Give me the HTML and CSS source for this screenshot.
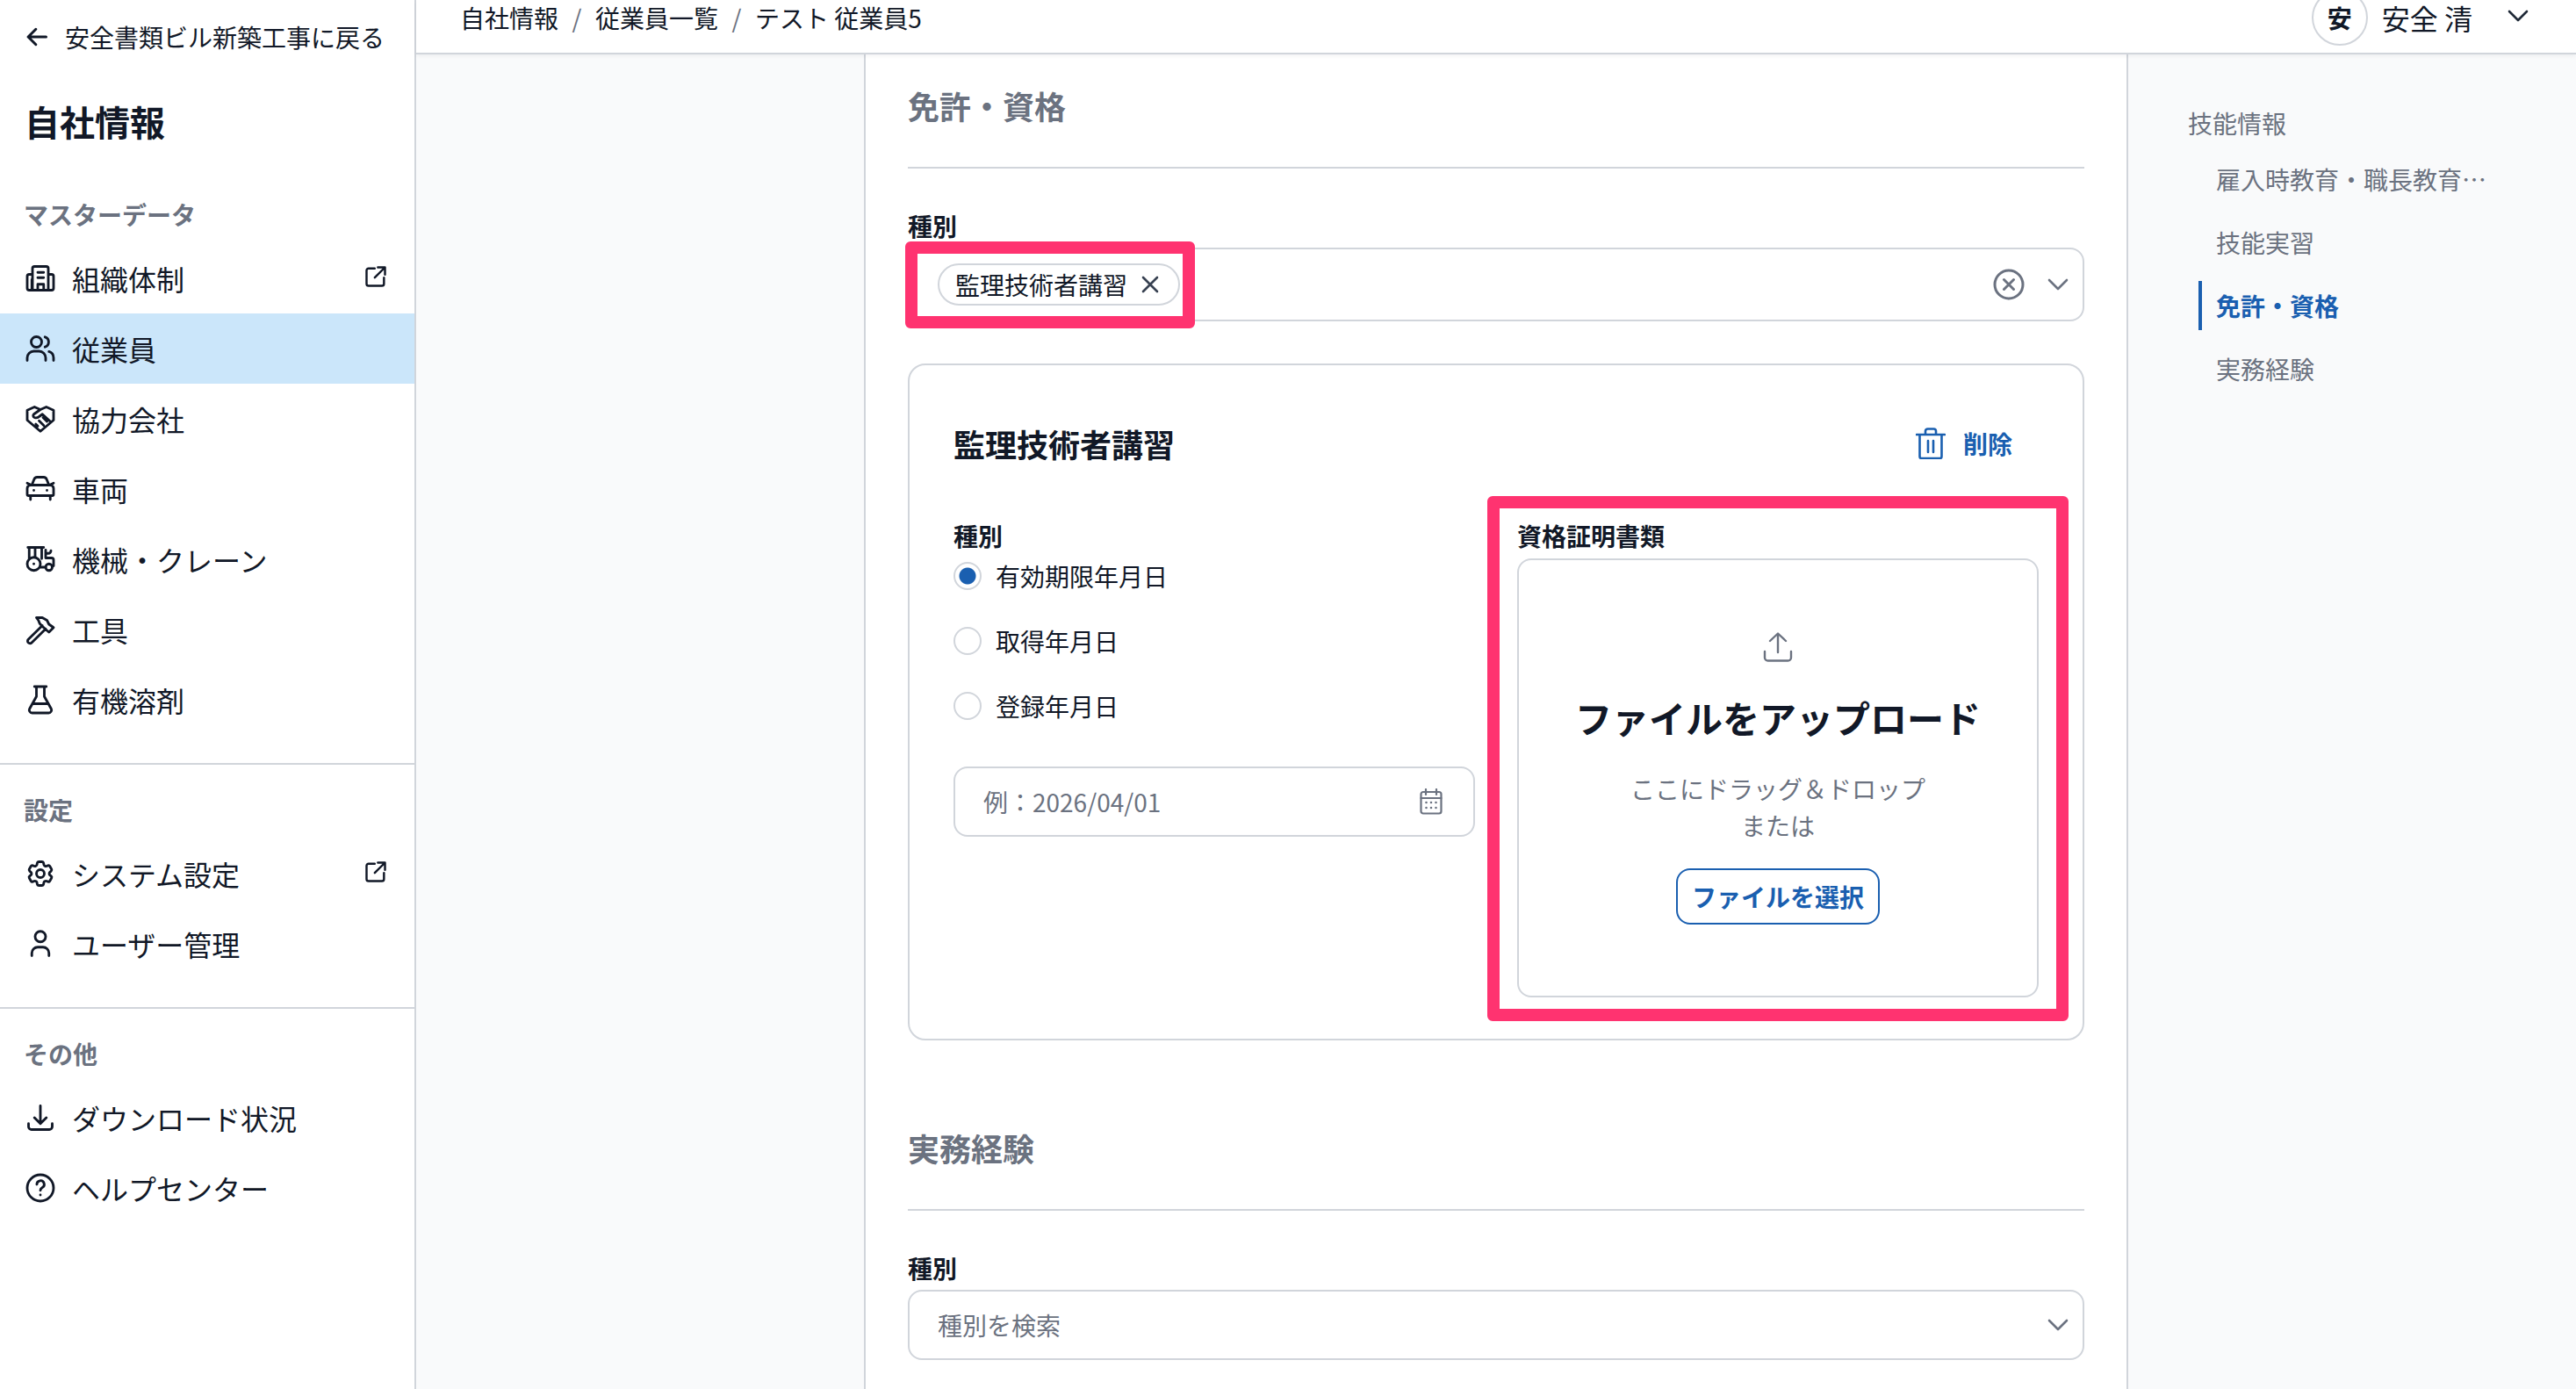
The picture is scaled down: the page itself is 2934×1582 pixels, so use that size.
FILE: index.html
```html
<!DOCTYPE html>
<html lang="ja">
<head>
<meta charset="utf-8">
<title>自社情報</title>
<link rel="stylesheet" href="styles.css">
</head>
<body>
<div class="app">
  <aside class="sidebar">
    <a class="back"><svg class="ico-back" viewBox="0 0 24 24"><path d="M21 12H3.5M11 4.5 3.5 12l7.5 7.5"/></svg><span>安全書類ビル新築工事に戻る</span></a>
    <h1 class="side-title">自社情報</h1>
    <section class="side-group first">
      <h2 class="side-label">マスターデータ</h2>
      <a class="nav"><svg class="ico" viewBox="0 0 24 24"><path d="M6 9H3.5A1.5 1.5 0 0 0 2 10.5v9A1.5 1.5 0 0 0 3.500 21h17a1.500 1.500 0 0 0 1.500-1.500v-9A1.500 1.500 0 0 0 20.500 9H18M6 21V4.500A1.500 1.500 0 0 1 7.500 3h9A1.500 1.500 0 0 1 18 4.500V21M5.500 13v8M10 7.500h4.500M10 11.500h4.500M10 21v-4.500h4.500V21"/></svg><span class="nav-text">組織体制</span><svg class="ico-ext" viewBox="0 0 24 24"><path d="M11 4H5a2 2 0 0 0-2 2v13a2 2 0 0 0 2 2h13a2 2 0 0 0 2-2v-6M11 13 21 3M14 3h7v7"/></svg></a>
      <a class="nav active"><svg class="ico" viewBox="0 0 24 24"><circle cx="9" cy="7" r="4"/><path d="M2 21v-2a5 5 0 0 1 5-5h4a5 5 0 0 1 5 5v2M15.500 3.200a4 4 0 0 1 0 7.600M22 21v-2a5 5 0 0 0-3.500-4.700"/></svg><span class="nav-text">従業員</span></a>
      <a class="nav"><svg class="ico" viewBox="0 0 24 24"><path d="M2 5.500 7.500 3l4.500 2 4.500-2L22 5.500V13l-10 8.500L2 13zM12 5 7 8.500c-.8.700-.6 2 .500 2.500 1.500.6 2.800.2 4-1l2-1.500 6 5.500M8.500 16l1.500 1.500M11 13.500l3.500 3.500M14 11l3 3"/></svg><span class="nav-text">協力会社</span></a>
      <a class="nav"><svg class="ico" viewBox="0 0 24 24"><path d="m5.500 9 1.700-4.300A2.500 2.500 0 0 1 9.500 3h5a2.500 2.500 0 0 1 2.300 1.700L18.500 9M2 7.500 5 9M22 7.500 19 9M4.500 9h15A2.500 2.500 0 0 1 22 11.500V16a1 1 0 0 1-1 1H3a1 1 0 0 1-1-1v-4.500A2.500 2.500 0 0 1 4.500 9zM4.500 17v3M19.500 17v3M7 13h.01M17 13h.01"/></svg><span class="nav-text">車両</span></a>
      <a class="nav"><svg class="ico" viewBox="0 0 24 24"><circle cx="7" cy="15.500" r="5"/><path d="M7 15.500h.01"/><circle cx="18.500" cy="18" r="2.500"/><path d="M12 18h4M22 17v-4.500a1.500 1.500 0 0 0-1.500-1.500H16M3.500 11.500V3h9.500v8.500M2.500 3h12M8 3v7M16 11V5M16 7.500h2a2 2 0 0 0 2-2"/></svg><span class="nav-text">機械・クレーン</span></a>
      <a class="nav"><svg class="ico" viewBox="0 0 24 24"><path d="M13.500 9 2.800 19.500a1.800 1.800 0 0 0 2.600 2.500L16 11.500M9 3h4.500L17 5l1.500 3 3.500 2.500-3.500 3.500-3-2.500-4-4-1-2.500z"/></svg><span class="nav-text">工具</span></a>
      <a class="nav"><svg class="ico" viewBox="0 0 24 24"><path d="M7.500 2h9M9 2v7.500L3.800 18.800A2.200 2.200 0 0 0 5.700 22h12.600a2.200 2.200 0 0 0 1.900-3.200L15 9.500V2M6.500 15h11"/></svg><span class="nav-text">有機溶剤</span></a>
    </section>
    <section class="side-group">
      <h2 class="side-label">設定</h2>
      <a class="nav"><svg class="ico" viewBox="0 0 24 24"><path d="M9.594 3.940c.09-.542.56-.94 1.110-.94h2.593c.55 0 1.020.398 1.110.94l.213 1.281c.063.374.313.686.645.870.074.04.147.083.22.127.325.196.72.257 1.075.124l1.217-.456a1.125 1.125 0 0 1 1.370.49l1.296 2.247a1.125 1.125 0 0 1-.26 1.431l-1.003.827c-.293.241-.438.613-.43.992a7.723 7.723 0 0 1 0 .255c-.008.378.137.75.43.991l1.004.827c.424.35.534.955.26 1.430l-1.298 2.247a1.125 1.125 0 0 1-1.369.491l-1.217-.456c-.355-.133-.75-.072-1.076.124a6.470 6.470 0 0 1-.22.128c-.331.183-.581.495-.644.869l-.213 1.281c-.09.543-.56.94-1.110.94h-2.594c-.55 0-1.019-.398-1.110-.94l-.213-1.281c-.062-.374-.312-.686-.644-.870a6.520 6.520 0 0 1-.22-.127c-.325-.196-.72-.257-1.076-.124l-1.217.456a1.125 1.125 0 0 1-1.369-.49l-1.297-2.247a1.125 1.125 0 0 1 .26-1.431l1.004-.827c.292-.24.437-.613.43-.991a6.932 6.932 0 0 1 0-.255c.007-.38-.138-.751-.43-.992l-1.004-.827a1.125 1.125 0 0 1-.26-1.430l1.297-2.247a1.125 1.125 0 0 1 1.370-.491l1.216.456c.356.133.751.072 1.076-.124.072-.044.146-.086.22-.128.332-.183.582-.495.644-.869l.214-1.280Z"/><circle cx="12" cy="12" r="3"/></svg><span class="nav-text">システム設定</span><svg class="ico-ext" viewBox="0 0 24 24"><path d="M11 4H5a2 2 0 0 0-2 2v13a2 2 0 0 0 2 2h13a2 2 0 0 0 2-2v-6M11 13 21 3M14 3h7v7"/></svg></a>
      <a class="nav"><svg class="ico" viewBox="0 0 24 24"><circle cx="12" cy="6.500" r="4"/><path d="M5.500 21v-2a4.500 4.500 0 0 1 4.500-4.500h4a4.500 4.500 0 0 1 4.500 4.500v2"/></svg><span class="nav-text">ユーザー管理</span></a>
    </section>
    <section class="side-group">
      <h2 class="side-label">その他</h2>
      <a class="nav"><svg class="ico" viewBox="0 0 24 24"><path d="M3 16.500v2.250A2.250 2.250 0 0 0 5.250 21h13.500A2.250 2.250 0 0 0 21 18.750V16.500M16.500 12 12 16.500m0 0L7.500 12m4.500 4.500V3"/></svg><span class="nav-text">ダウンロード状況</span></a>
      <a class="nav"><svg class="ico" viewBox="0 0 24 24"><circle cx="12" cy="12" r="10"/><path d="M9.300 9.300a2.800 2.800 0 1 1 4.200 2.400c-.9.5-1.500 1.100-1.500 2.100M12 17.300h.01"/></svg><span class="nav-text">ヘルプセンター</span></a>
    </section>
  </aside>

  <div class="main">
    <header class="topbar">
      <nav class="crumbs">
        <span>自社情報</span><span class="sep">/</span><span>従業員一覧</span><span class="sep">/</span><span>テスト 従業員5</span>
      </nav>
      <div class="user">
        <span class="avatar">安</span>
        <span class="user-name">安全 清</span>
        <svg class="user-chev" viewBox="0 0 24 24"><path d="m2 6 10 10L22 6"/></svg>
      </div>
    </header>

    <div class="body">
      <div class="gutter"></div>
      <main class="sheet">
        <h2 class="section-title">免許・資格</h2>
        <div class="field-label first-label">種別</div>
        <div class="select tall">
          <span class="chip">監理技術者講習<svg class="chip-x" viewBox="0 0 20 20"><path d="m2 2 16 16M18 2 2 18"/></svg></span>
          <span class="select-tools">
            <svg class="clear" viewBox="0 0 36 36"><circle cx="18" cy="18" r="16"/><path d="m12.500 12.500 11 11M23.500 12.500l-11 11"/></svg>
            <svg class="chev" viewBox="0 0 24 14"><path d="m2 2 10 10L22 2"/></svg>
          </span>
          <div class="mark mark-chip"></div>
        </div>

        <div class="card">
          <div class="card-head">
            <h3 class="card-title">監理技術者講習</h3>
            <a class="delete"><svg class="trash" viewBox="0 0 34 36"><path d="M1 8h32M4.500 8v25a2 2 0 0 0 2 2h21a2 2 0 0 0 2-2V8M11 8V4a2.500 2.500 0 0 1 2.500-2.500h7A2.500 2.500 0 0 1 23 4v4M14 15v13M20 15v13"/></svg><span>削除</span></a>
          </div>
          <div class="card-cols">
            <div class="col">
              <div class="field-label">種別</div>
              <div class="radios">
                <label class="radio"><span class="dot on"></span>有効期限年月日</label>
                <label class="radio"><span class="dot"></span>取得年月日</label>
                <label class="radio"><span class="dot"></span>登録年月日</label>
              </div>
              <div class="date-input">
                <span>例：2026/04/01</span>
                <svg class="cal" viewBox="0 0 26 30"><path d="M7 1v6M19 1v6"/><rect x="1.500" y="4" width="23" height="24.500" rx="2.500"/><path d="M1.500 11h23"/><path class="cal-dots" d="M7.500 16h.01M13 16h.01M18.500 16h.01M7.500 22h.01M13 22h.01M18.500 22h.01"/></svg>
              </div>
            </div>
            <div class="col col-file">
              <div class="field-label">資格証明書類</div>
              <div class="drop">
                <svg class="upload" viewBox="0 0 34 34"><path d="M17 23V2M8 10l9-8.500 9 8.500M2 22v7a3.500 3.500 0 0 0 3.500 3.500h23A3.500 3.500 0 0 0 32 29v-7"/></svg>
                <div class="drop-title">ファイルをアップロード</div>
                <div class="drop-text">ここにドラッグ＆ドロップ<br>または</div>
                <button class="pick">ファイルを選択</button>
              </div>
              <div class="mark mark-file"></div>
            </div>
          </div>
        </div>

        <h2 class="section-title second">実務経験</h2>
        <div class="field-label first-label">種別</div>
        <div class="select">
          <span class="placeholder">種別を検索</span>
          <span class="select-tools"><svg class="chev" viewBox="0 0 24 14"><path d="m2 2 10 10L22 2"/></svg></span>
        </div>
      </main>
      <aside class="toc">
        <a class="toc-head">技能情報</a>
        <a class="toc-item">雇入時教育・職長教育…</a>
        <a class="toc-item">技能実習</a>
        <a class="toc-item current">免許・資格</a>
        <a class="toc-item">実務経験</a>
      </aside>
    </div>
  </div>
</div>
</body>
</html>
```

FILE: styles.css
```css
* { box-sizing: border-box; }
html, body { margin: 0; height: 100%; overflow: hidden; }
body {
  font-family: "Noto Sans CJK JP", "Noto Sans", sans-serif;
  font-size: 28px;
  color: #111827;
  background: #fff;
}
h1, h2, h3 { margin: 0; }
svg { display: block; flex: none; fill: none; stroke: currentColor; stroke-linecap: round; stroke-linejoin: round; }

.app { display: flex; height: 1582px; }

/* sidebar */
.sidebar { width: 474px; flex: none; border-right: 2px solid #d1d5db; background: #fff; }
.back { display: flex; align-items: center; height: 40px; margin: 22px 0 0 28px; gap: 18px; line-height: 40px; }
.ico-back { width: 28px; height: 28px; stroke-width: 2.600; }
.side-title { font-size: 40px; line-height: 60px; font-weight: 700; margin: 46px 0 0 28px; }
.side-group { padding: 31px 0 32px; border-top: 2px solid #d1d5db; }
.side-group.first { padding-top: 0; border-top: 0; margin-top: 56px; }
.side-label { font-size: 28px; line-height: 40px; font-weight: 700; color: #6b7280; padding-left: 27px; margin-bottom: 13px; }
.nav { display: flex; align-items: center; height: 80px; padding: 0 28px; gap: 18px; }
.nav.active { background: #cbe6fa; }
.nav-text { flex: 1; font-size: 32px; line-height: 48px; }
.ico { width: 36px; height: 36px; stroke-width: 1.900; }
.ico-ext { width: 28px; height: 28px; stroke-width: 2.100; margin-right: 2px; margin-top: -4px; }

/* main column */
.main { flex: 1; min-width: 0; display: flex; flex-direction: column; }
.topbar {
  flex: none; height: 62px; display: flex; justify-content: space-between; align-items: center;
  padding: 0 54px 20px 50px; border-bottom: 2px solid #d1d5db;
  box-shadow: 0 2px 4px rgba(17, 24, 39, .05); position: relative; z-index: 1; background: #fff;
}
.crumbs { display: flex; line-height: 40px; white-space: nowrap; }
.sep { width: 42px; text-align: center; color: #6b7280; }
.user { display: flex; align-items: center; }
.avatar {
  width: 64px; height: 64px; flex: none; border: 2px solid #d1d5db; border-radius: 50%;
  display: flex; align-items: center; justify-content: center; font-weight: 700; margin-right: 16px;
}
.user-name { font-size: 32px; line-height: 48px; }
.user-chev { width: 24px; height: 24px; stroke-width: 2.600; margin-left: 40px; color: #1f2937; margin-top: -2px; }

.body { flex: 1; min-height: 0; display: flex; }
.gutter { width: 510px; flex: none; background: #f9fafb; }
.sheet { width: 1440px; flex: none; padding: 0 48px; background: #fff; border-left: 2px solid #d1d5db; border-right: 2px solid #d1d5db; }
.toc { flex: 1; background: #f9fafb; padding: 42px 0 0 68px; color: #6b7280; }

.section-title {
  font-size: 36px; line-height: 54px; font-weight: 700; color: #6b7280;
  margin-top: 31px; padding-bottom: 43px; border-bottom: 2px solid #d1d5db;
}
.section-title.second { margin-top: 95px; }
.field-label { font-size: 28px; line-height: 40px; font-weight: 700; }
.first-label { margin-top: 45px; margin-bottom: 5px; }

.select {
  position: relative; display: flex; align-items: center; height: 80px;
  border: 2px solid #d1d5db; border-radius: 16px; padding: 0 16px 0 32px;
}
.select.tall { height: 84px; }
.placeholder { flex: 1; color: #6b7280; }
.chip {
  display: flex; align-items: center; height: 48px; padding: 0 22px 0 18px;
  border: 2px solid #d1d5db; border-radius: 24px; line-height: 40px;
}
.chip-x { width: 20px; height: 20px; margin-left: 16px; stroke-width: 2.600; color: #374151; }
.select-tools { margin-left: auto; display: flex; align-items: center; gap: 26px; color: #6b7280; }
.clear { width: 36px; height: 36px; stroke-width: 3; }
.chev { width: 24px; height: 14px; stroke-width: 2.600; }

.mark { position: absolute; border: 14px solid #ff3370; border-radius: 6px; pointer-events: none; }
.mark-chip { left: -5px; top: -9px; width: 330px; height: 99px; }

/* card */
.card { margin-top: 48px; height: 771px; border: 2px solid #d1d5db; border-radius: 20px; padding: 0 50px; }
.card-head { display: flex; align-items: center; justify-content: space-between; height: 78px; margin-top: 50px; padding-right: 30px; }
.card-title { font-size: 36px; line-height: 54px; font-weight: 700; }
.delete { display: flex; align-items: center; gap: 20px; color: #1a5fb0; font-weight: 700; }
.trash { width: 34px; height: 36px; stroke-width: 2.600; }
.card-cols { display: grid; grid-template-columns: 594px 594px; column-gap: 48px; margin-top: 46px; }
.col { min-width: 0; }
.col-file { position: relative; }
.mark-file { left: -34px; right: -34px; top: -25px; height: 598px; }
.radios { display: flex; flex-direction: column; gap: 42px; margin-top: 10px; }
.radio { display: flex; align-items: center; gap: 16px; height: 32px; line-height: 40px; }
.dot { width: 32px; height: 32px; flex: none; border: 2px solid #d1d5db; border-radius: 50%; background: #fff; }
.dot.on { background: radial-gradient(circle, #1a5fb0 0 9px, #fff 10px); }
.date-input {
  display: flex; align-items: center; justify-content: space-between; height: 80px; margin-top: 53px;
  border: 2px solid #d1d5db; border-radius: 16px; padding: 0 35px 0 32px; color: #6b7280;
}
.cal { width: 26px; height: 30px; stroke-width: 2.200; }
.cal-dots { stroke-width: 2.600; }

.drop {
  height: 500px; margin-top: 6px; border: 2px solid #d1d5db; border-radius: 16px;
  display: flex; flex-direction: column; align-items: center; padding-top: 82px;
}
.upload { width: 34px; height: 34px; stroke-width: 2.400; color: #6b7280; }
.drop-title { font-size: 42px; line-height: 60px; font-weight: 700; margin-top: 33px; white-space: nowrap; }
.drop-text { color: #6b7280; line-height: 42px; text-align: center; margin-top: 30px; }
.pick {
  width: 232px; height: 64px; margin-top: 28px; padding: 0; background: #fff; color: #1a5fb0;
  border: 2px solid #1a5fb0; border-radius: 16px; font: 700 28px "Noto Sans CJK JP", "Noto Sans", sans-serif;
}

/* toc */
.toc-head { display: block; height: 72px; line-height: 72px; }
.toc-item {
  display: block; height: 56px; line-height: 56px; margin: 0 0 16px 12px; padding-left: 16px;
  border-left: 4px solid transparent; white-space: nowrap;
}
.toc-item.current { color: #1a5fb0; font-weight: 700; border-left-color: #1a5fb0; }
```
